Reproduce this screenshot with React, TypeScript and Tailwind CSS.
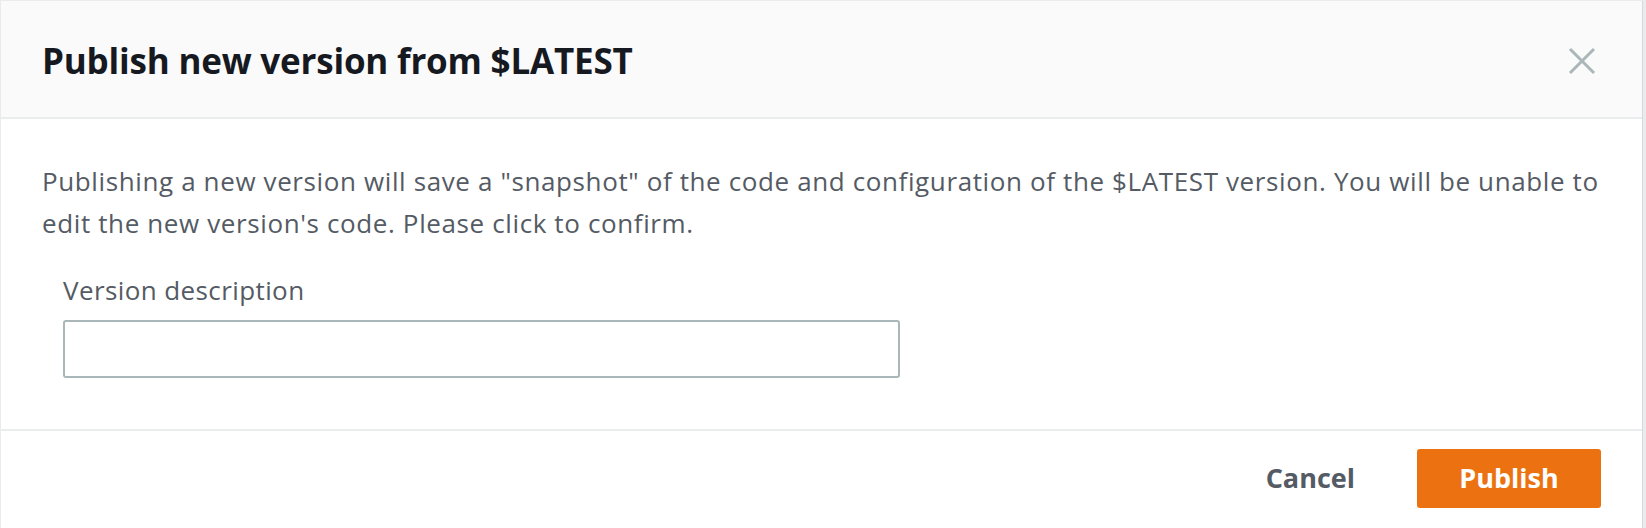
export default function App() {
  return (
    <div className="w-full h-[528px] overflow-hidden bg-[#e9ebed] pt-px pl-px">
      {/* modal */}
      <div className="w-[1642px] h-[560px] bg-white border-r border-[#d5dbdb] font-['Open_Sans',sans-serif]">
        {/* header */}
        <div className="h-[118px] bg-[#fafafa] border-b-2 border-[#eaeded] flex items-center justify-between pl-[41px] pr-[46px] pt-[4px]">
          <h2 className="text-[35px] font-bold text-[#16191f] tracking-[-0.2px]">
            Publish new version from $LATEST
          </h2>
          <button className="w-[28px] h-[28px] flex items-center justify-center">
            <svg width="28" height="28" viewBox="0 0 28 28" fill="none">
              <path d="M2 2 L26 26 M26 2 L2 26" stroke="#aab7b8" strokeWidth="3" />
            </svg>
          </button>
        </div>

        {/* body */}
        <div className="pl-[41px] pr-[40px] pt-[41px] pb-[51px] border-b-2 border-[#eaeded]">
          <p className="text-[26px] leading-[42px] text-[#545b64] tracking-[0.62px]">
            Publishing a new version will save a "snapshot" of the code and configuration of the $LATEST version. You will be unable to edit the new version's code. Please click to confirm.
          </p>
          <div className="pl-[21px] pt-[31px]">
            <label className="block text-[26px] leading-[30px] text-[#545b64] tracking-[0.4px]">
              Version description
            </label>
            <input
              type="text"
              className="mt-[15px] w-[837px] h-[58px] border-2 border-[#aab7b8] rounded-[3px] bg-white px-3 text-[24px] outline-none"
            />
          </div>
        </div>

        {/* footer */}
        <div className="flex items-center justify-end gap-[62px] pt-[18px] pr-[41px]">
          <button className="text-[27px] font-bold text-[#545b64] tracking-[0px]">Cancel</button>
          <button className="w-[184px] h-[59px] bg-[#ec7211] rounded-[3px] text-[27px] font-bold text-white tracking-[0px]">
            Publish
          </button>
        </div>
      </div>
    </div>
  );
}
